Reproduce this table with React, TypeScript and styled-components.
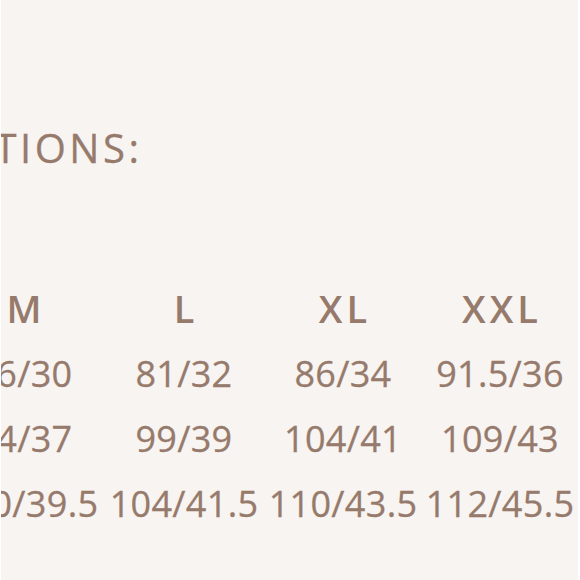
import React from "react";
import styled, { createGlobalStyle } from "styled-components";

const Global = createGlobalStyle`
  html, body { margin: 0; padding: 0; background: #ffffff; }
  #root { width: 580px; height: 580px; }
`;

const Panel = styled.div`
  box-sizing: border-box;
  margin: 0 2px 0 1px;
  height: 580px;
  background: #f8f4f1;
  overflow: hidden;
  padding-top: 128px;
  color: #967a6c;
  font-family: "Open Sans", "Liberation Sans", sans-serif;
`;

const Sheet = styled.div`
  margin-left: -417px;
  width: 1000px;
`;

const Title = styled.h2`
  margin: 0;
  padding-left: 86px;
  font-size: 40px;
  line-height: 40px;
  font-weight: 400;
  letter-spacing: 3.5px;
  white-space: nowrap;
  -webkit-text-stroke: 0.3px #967a6c;
`;

const Table = styled.div`
  margin-top: 108px;
  display: grid;
  grid-template-columns: 200px 160px 160px 160px 158px 156px;
  grid-auto-rows: 65px;
`;

const Cell = styled.div<{ $head?: boolean; $label?: boolean }>`
  display: flex;
  align-items: center;
  justify-content: ${(p) => (p.$label ? "flex-start" : "center")};
  font-size: ${(p) => (p.$head ? "38px" : p.$label ? "24px" : "36px")};
  line-height: 65px;
  font-weight: ${(p) => (p.$head ? 600 : 400)};
  white-space: nowrap;
  letter-spacing: ${(p) => (p.$head ? "4px" : "0.3px")};
  text-indent: ${(p) => (p.$head ? "4px" : "0")};
  -webkit-text-stroke: ${(p) => (p.$head ? "0" : "0.3px #967a6c")};
`;

const sizes = ["S", "M", "L", "XL", "XXL"];
const rows: { label: string; values: string[] }[] = [
  { label: "WAIST", values: ["71/28", "76/30", "81/32", "86/34", "91.5/36"] },
  { label: "HIPS", values: ["89/35", "94/37", "99/39", "104/41", "109/43"] },
  { label: "LENGTH", values: ["98/38.5", "100/39.5", "104/41.5", "110/43.5", "112/45.5"] },
];

export default function App() {
  return (
    <>
      <Global />
      <Panel>
        <Sheet>
          <Title>SIZE SPECIFICATIONS:</Title>
          <Table>
            <Cell $label />
            {sizes.map((s) => (
              <Cell key={s} $head>
                {s}
              </Cell>
            ))}
            {rows.map((r) => (
              <React.Fragment key={r.label}>
                <Cell $label>{r.label}</Cell>
                {r.values.map((v, i) => (
                  <Cell key={i}>{v}</Cell>
                ))}
              </React.Fragment>
            ))}
          </Table>
        </Sheet>
      </Panel>
    </>
  );
}
